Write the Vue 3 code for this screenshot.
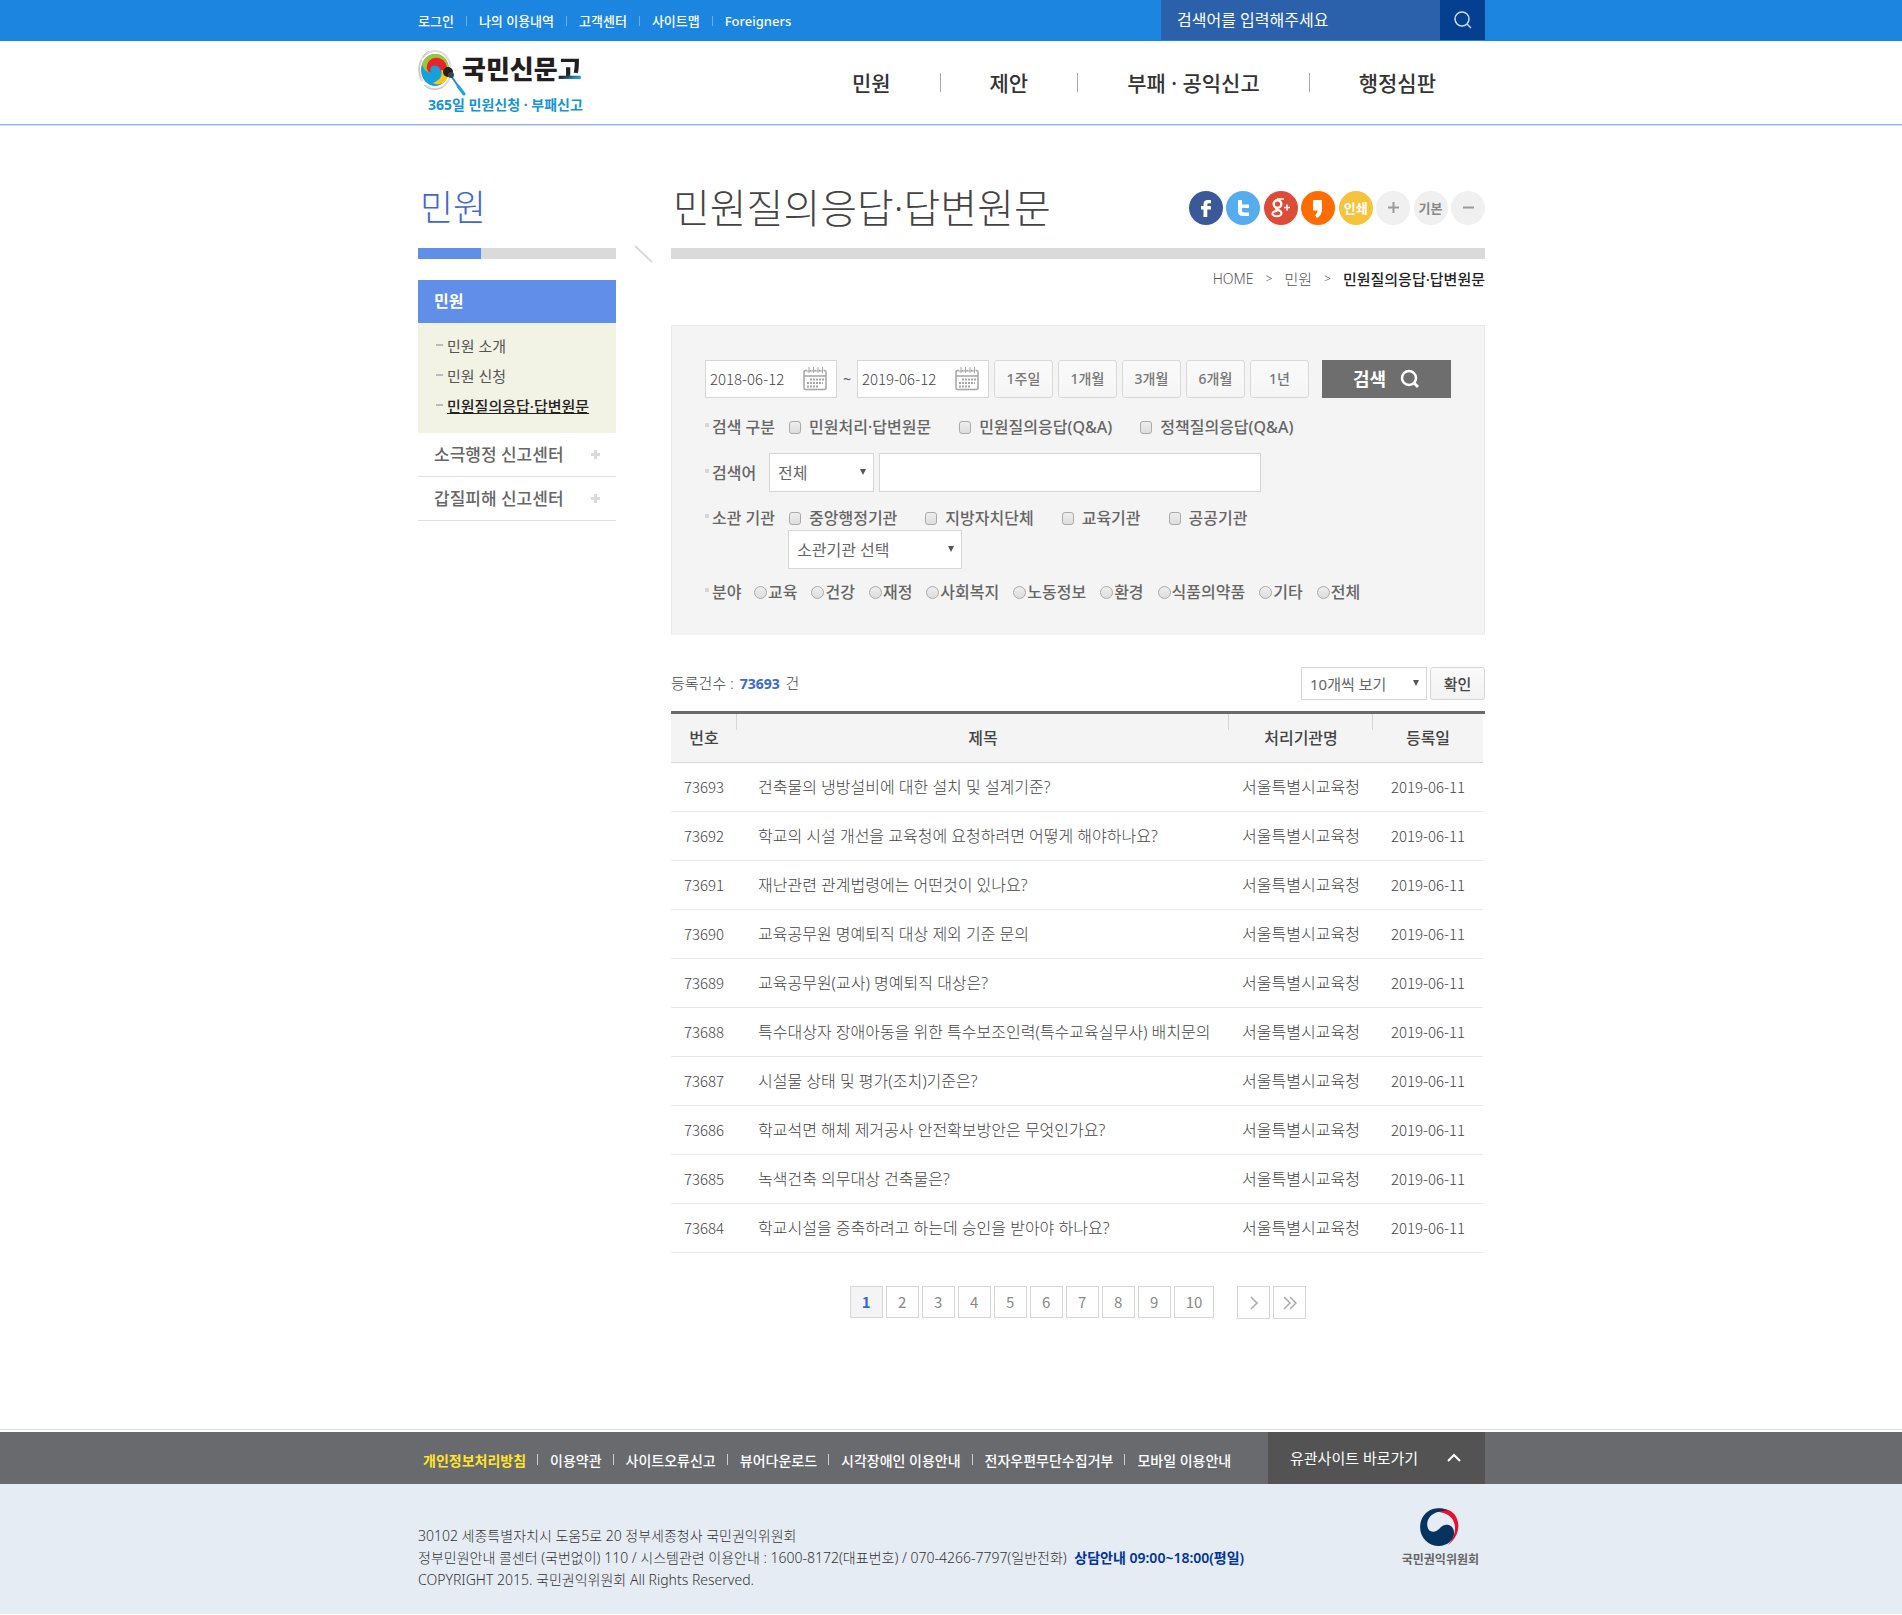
<script setup>
import { ref } from 'vue'

const topLinks = ['로그인', '나의 이용내역', '고객센터', '사이트맵', 'Foreigners']
const mainMenu = ['민원', '제안', '부패 · 공익신고', '행정심판']
const subMenu = ['민원 소개', '민원 신청', '민원질의응답·답변원문']
const otherMenu = ['소극행정 신고센터', '갑질피해 신고센터']

const fromDate = ref('2018-06-12')
const toDate = ref('2019-06-12')
const periods = ['1주일', '1개월', '3개월', '6개월', '1년']
const kinds = ['민원처리·답변원문', '민원질의응답(Q&A)', '정책질의응답(Q&A)']
const orgs = ['중앙행정기관', '지방자치단체', '교육기관', '공공기관']
const fields = ['교육', '건강', '재정', '사회복지', '노동정보', '환경', '식품의약품', '기타', '전체']

const titles = [
  '건축물의 냉방설비에 대한 설치 및 설계기준?',
  '학교의 시설 개선을 교육청에 요청하려면 어떻게 해야하나요?',
  '재난관련 관계법령에는 어떤것이 있나요?',
  '교육공무원 명예퇴직 대상 제외 기준 문의',
  '교육공무원(교사) 명예퇴직 대상은?',
  '특수대상자 장애아동을 위한 특수보조인력(특수교육실무사) 배치문의',
  '시설물 상태 및 평가(조치)기준은?',
  '학교석면 해체 제거공사 안전확보방안은 무엇인가요?',
  '녹색건축 의무대상 건축물은?',
  '학교시설을 증축하려고 하는데 승인을 받아야 하나요?',
]
const rows = titles.map((title, i) => ({
  no: 73693 - i,
  title,
  org: '서울특별시교육청',
  date: '2019-06-11',
}))

const footLinks = ['개인정보처리방침', '이용약관', '사이트오류신고', '뷰어다운로드', '시각장애인 이용안내', '전자우편무단수집거부', '모바일 이용안내']
</script>

<template>
  <div class="page">
    <div class="topbar">
      <div class="wrap topbar-in">
        <ul class="toplinks">
          <li v-for="t in topLinks" :key="t"><a href="#">{{ t }}</a></li>
        </ul>
        <form class="topsearch" @submit.prevent>
          <input type="text" aria-label="통합검색" placeholder="검색어를 입력해주세요" />
          <button type="submit" aria-label="검색">
            <svg width="18" height="18" viewBox="0 0 18 18" fill="none" stroke="#c9dcf3" stroke-width="1.5">
              <circle cx="8" cy="8" r="7" /><path d="M13 13l4 4" />
            </svg>
          </button>
        </form>
      </div>
    </div>

    <header class="header">
      <div class="wrap header-in">
        <a href="#" class="logo">
          <svg class="logo-mark" width="50" height="48" viewBox="0 0 50 48" fill="none">
            <ellipse cx="17" cy="20" rx="16" ry="19" stroke="#dcdcdc" stroke-width="2" stroke-dasharray="38 5 22 3" />
            <path d="M3 28C-1 18 2 6 11 1M6 35c6 6 14 5 19 2" stroke="#c4c4c4" />
            <ellipse cx="17" cy="20" rx="14" ry="16" fill="#18a0dc" />
            <path d="M4 14C7 6 12 4 18 4c8 0 13 7 13 15l-6-5c-4-6-11-5-13 0-2 4-1 7 1 9-6-1-8-5-9-9z" fill="#9bc53b" />
            <path d="M9 16c1-6 6-9 11-8 6 1 9 6 9 11l-6 4c0-6-5-9-8-7-3 1-3 4-2 7-3-1-5-4-4-7z" fill="#e8232a" />
            <path d="M23 20c2 6-1 10-8 13 8 4 15-2 16-11z" fill="#fcc70e" />
            <path d="M31 23L45 43" stroke="#1b8fca" stroke-width="2" />
            <path d="M40 36l6 8" stroke="#1ea3dc" stroke-width="3" stroke-linecap="round" />
            <circle cx="30" cy="22" r="5" fill="#231f20" /><circle cx="33" cy="25" r="3" fill="#3a4350" />
          </svg>
          <span class="logo-name">국민신문<b>고</b></span>
          <span class="logo-sub">365일 민원신청 · 부패신고</span>
        </a>
        <ul class="mainmenu">
          <li v-for="m in mainMenu" :key="m"><a href="#">{{ m }}</a></li>
        </ul>
      </div>
    </header>

    <div class="wrap body">
      <aside class="side">
        <h2>민원</h2>
        <div class="sidebar-line"><i></i></div>
        <a href="#" class="side-head">민원</a>
        <ul class="side-sub">
          <li v-for="(s, i) in subMenu" :key="s" :class="{ on: i === 2 }"><a href="#">{{ s }}</a></li>
        </ul>
        <ul class="side-other">
          <li v-for="s in otherMenu" :key="s">
            <a href="#">{{ s }}
              <svg width="9" height="9" viewBox="0 0 9 9"><path d="M3 0h3v3h3v3H6v3H3V6H0V3h3z" fill="#dadada" /></svg>
            </a>
          </li>
        </ul>
      </aside>

      <svg class="slash" width="19" height="18" viewBox="0 0 19 18"><path d="M1 1l17 16" stroke="#dadada" stroke-width="2" /></svg>

      <main class="main">
        <div class="title-row">
          <h1>민원질의응답·답변원문</h1>
          <div class="share">
            <button type="button" class="fb" aria-label="페이스북">
              <svg width="34" height="34" viewBox="0 0 34 34"><path d="M14.500 26V18.500H12V15h2.500v-1.500c0-3.200 1.600-4.500 4.500-4.500h3v3.300h-2c-1.200 0-1.700.5-1.700 1.500V15H22v3.500h-3.700V26z" fill="#fff" /></svg>
            </button>
            <button type="button" class="tw" aria-label="트위터">
              <svg width="34" height="34" viewBox="0 0 34 34"><path d="M12 9h4v4.500h7V17h-7v2.500c0 1.300.6 2 2 2h5V25h-6c-3.500 0-5-1.700-5-5z" fill="#fff" /></svg>
            </button>
            <button type="button" class="gp" aria-label="구글 플러스">
              <svg width="34" height="34" viewBox="0 0 34 34" fill="none" stroke="#fff">
                <circle cx="13.500" cy="13" r="3.800" stroke-width="2.400" /><path d="M13 8h7" stroke-width="1.500" />
                <path d="M12 16.500c-1.500 1.800 3 2.400 4.500 3.800 2.200 2.200.3 5-3.300 5-3.300 0-5.200-1.300-4.700-3 .5-1.500 2.500-2.300 5-2.200" stroke-width="2" />
                <path d="M20 16.500h6M23 13.500v6" stroke-width="1.600" />
              </svg>
            </button>
            <button type="button" class="ks" aria-label="카카오스토리">
              <svg width="34" height="34" viewBox="0 0 34 34"><path d="M12 9h9v9c0 4.500-1.700 7.500-5 9l-2-3c1.600-1 2.300-2.300 2.500-4.500H12z" fill="#fff" /></svg>
            </button>
            <button type="button" class="pr">인쇄</button>
            <button type="button" class="sz" aria-label="글자 크게">
              <svg width="34" height="34" viewBox="0 0 34 34"><path d="M12 16.500h11M17.500 11v11" stroke="#999" stroke-width="2" /></svg>
            </button>
            <button type="button" class="sz">기본</button>
            <button type="button" class="sz" aria-label="글자 작게">
              <svg width="34" height="34" viewBox="0 0 34 34"><path d="M12 16.500h11" stroke="#999" stroke-width="2" /></svg>
            </button>
          </div>
        </div>
        <div class="main-line"></div>

        <nav class="crumb">
          <a href="#" class="home">HOME</a><span>&gt;</span><a href="#">민원</a><span>&gt;</span><strong>민원질의응답·답변원문</strong>
        </nav>

        <form class="panel" @submit.prevent>
          <div class="row dates">
            <div v-for="k in 2" :key="k" class="date-cell">
              <span v-if="k === 2" class="tilde">~</span>
              <div class="date">
                <input v-if="k === 1" v-model="fromDate" type="text" aria-label="시작일" />
                <input v-else v-model="toDate" type="text" aria-label="종료일" />
                <button type="button" aria-label="달력">
                  <svg width="24" height="24" viewBox="0 0 24 24" fill="none" stroke="#a5a5a5">
                    <rect x="1" y="3.500" width="22" height="19" rx="1.500" stroke-width="1.500" />
                    <path d="M1 9h22" stroke-width="1.500" />
                    <path d="M5.500 1v6M10 1v6M14.500 1v6M19 1v6" stroke="#fff" stroke-width="3" />
                    <path d="M6 0v6M10.500 0v6M15 0v6M19.500 0v6M4 4h16" />
                    <path d="M7 12.500h14M4 16h16M4 19.500h11" stroke-width="2" stroke-dasharray="2 1" />
                  </svg>
                </button>
              </div>
            </div>
            <button v-for="p in periods" :key="p" type="button" class="period">{{ p }}</button>
            <button type="submit" class="go">검색
              <svg width="20" height="20" viewBox="0 0 20 20" fill="none" stroke="#fff">
                <circle cx="9" cy="9" r="7" stroke-width="2.500" /><path d="M14 14l4 4" stroke-width="3" />
              </svg>
            </button>
          </div>

          <div class="row kinds">
            <span class="lab">검색 구분</span>
            <label v-for="k in kinds" :key="k" class="check"><input type="checkbox" />{{ k }}</label>
          </div>

          <div class="row keyword">
            <label class="lab" for="kw">검색어</label>
            <div class="sel sel-a"><select aria-label="검색 범위"><option>전체</option></select></div>
            <input id="kw" type="text" class="kw" />
          </div>

          <div class="row orgs">
            <span class="lab">소관 기관</span>
            <label v-for="o in orgs" :key="o" class="check"><input type="checkbox" />{{ o }}</label>
          </div>
          <div class="sel sel-b"><select aria-label="소관기관"><option>소관기관 선택</option></select></div>

          <div class="row fields">
            <span class="lab">분야</span>
            <label v-for="f in fields" :key="f" class="radio"><input type="radio" name="field" />{{ f }}</label>
          </div>
        </form>

        <div class="list-head">
          <p>등록건수 : <strong>73693</strong> 건</p>
          <div class="list-ctl">
            <div class="sel sel-c"><select aria-label="목록 개수"><option>10개씩 보기</option></select></div>
            <button type="button" class="ok">확인</button>
          </div>
        </div>

        <div class="table-box">
          <table>
            <colgroup><col class="c1" /><col /><col class="c3" /><col class="c4" /></colgroup>
            <thead>
              <tr><th>번호</th><th>제목</th><th>처리기관명</th><th>등록일</th></tr>
            </thead>
            <tbody>
              <tr v-for="r in rows" :key="r.no">
                <td class="num">{{ r.no }}</td>
                <td class="tit"><a href="#">{{ r.title }}</a></td>
                <td>{{ r.org }}</td>
                <td class="num">{{ r.date }}</td>
              </tr>
            </tbody>
          </table>
        </div>

        <nav class="pages">
          <a v-for="n in 10" :key="n" href="#" :class="{ on: n === 1 }">{{ n }}</a>
          <a href="#" class="arrow first" aria-label="다음">
            <svg width="14" height="14" viewBox="0 0 14 14" fill="none" stroke="#aaa" stroke-width="1.500"><path d="M4 1l6 6-6 6" /></svg>
          </a>
          <a href="#" class="arrow" aria-label="마지막">
            <svg width="14" height="14" viewBox="0 0 14 14" fill="none" stroke="#aaa" stroke-width="1.500"><path d="M1 1l6 6-6 6M7 1l6 6-6 6" /></svg>
          </a>
        </nav>
      </main>
    </div>

    <footer>
      <div class="footbar">
        <div class="wrap footbar-in">
          <ul>
            <li v-for="f in footLinks" :key="f"><a href="#">{{ f }}</a></li>
          </ul>
          <button type="button">유관사이트 바로가기
            <svg width="14" height="10" viewBox="0 0 14 10" fill="none" stroke="#fff" stroke-width="2"><path d="M1 8l6-6 6 6" /></svg>
          </button>
        </div>
      </div>
      <div class="footinfo">
        <div class="wrap footinfo-in">
          <address>
            30102 세종특별자치시 도움5로 20 정부세종청사 국민권익위원회<br />
            정부민원안내 콜센터 (국번없이) 110 / 시스템관련 이용안내 : 1600-8172(대표번호) / 070-4266-7797(일반전화) <strong>상담안내 09:00~18:00(평일)</strong><br />
            COPYRIGHT 2015. 국민권익위원회 All Rights Reserved.
          </address>
          <div class="gov">
            <svg width="40" height="38" viewBox="0 0 40 38">
              <path d="M7 6C15-2 29-1 35 7 41 16 39 29 28 37 35 29 37 20 33 12 28 4 16 2 7 6z" fill="#e8102f" />
              <path d="M29 3C18-3 5 1 1 13c-4 14 6 25 18 25 9 0 16-7 15-14 0-6-7-10-13-5-4 5-9 6-12 3C5 16 8 8 15 5c5-2 10-3 14-2z" fill="#06345f" />
            </svg>
            <span>국민권익위원회</span>
          </div>
        </div>
      </div>
    </footer>
  </div>
</template>

<style>
body { margin: 0; background: #fff; }
</style>

<style scoped>
* { box-sizing: border-box; }
.page { font-family: "Noto Sans", "Noto Sans CJK KR", sans-serif; font-size: 16px; line-height: 24px; color: #666; }
ul, h1, h2, p { margin: 0; padding: 0; list-style: none; }
a { color: inherit; text-decoration: none; }
button, input, select { font: inherit; color: inherit; margin: 0; padding: 0; border: 0; border-radius: 0; }
button { cursor: pointer; }
svg { display: block; flex: none; }
.wrap { max-width: 1068px; margin: 0 auto; padding-left: 1px; }

.topbar { background: #1b85df; color: #fff; }
.topbar-in { display: flex; justify-content: space-between; height: 41px; }
.toplinks { display: flex; align-items: center; font-size: 13px; line-height: 20px; font-weight: 500; }
.toplinks li { display: flex; align-items: center; }
.toplinks li + li::before { content: ""; width: 1px; height: 10px; margin: 0 12px; background: #68b1f0; }
.topsearch { display: flex; width: 324px; height: 40px; }
.topsearch input { flex: 1; min-width: 0; padding-left: 16px; background: #2b60ab; color: #fff; outline: 0; }
.topsearch input::placeholder { color: #fff; opacity: 1; }
.topsearch button { display: flex; align-items: center; justify-content: center; width: 45px; background: #043f90; }

.header { border-bottom: 1px solid #d9dcea; }
.header::after { content: ""; display: block; height: 1px; background: #8fb0f0; }
.header-in { display: flex; justify-content: space-between; height: 83px; }
.logo { display: grid; grid-template-columns: 44px auto; grid-template-rows: 42px 26px; align-content: start; padding-top: 9px; }
.logo-mark { grid-row: 1 / 3; grid-column: 1; }
.logo-name { font-size: 26px; line-height: 38px; font-weight: 900; color: #231f20; }
.logo-name b { font-weight: 900; background: linear-gradient(160deg, #231f20 60%, #1b9ad6 75%); -webkit-background-clip: text; background-clip: text; color: transparent; }
.logo-sub { grid-row: 2; grid-column: 1 / 3; padding-left: 10px; font-size: 14px; line-height: 26px; font-weight: 700; color: #1594d2; white-space: nowrap; }
.mainmenu { display: flex; align-items: center; padding-right: 49px; font-size: 21px; line-height: 30px; font-weight: 500; color: #333; }
.mainmenu li { display: flex; align-items: center; }
.mainmenu li + li::before { content: ""; width: 1px; height: 19px; margin: 0 49px; background: #aaa; }

.body { display: grid; grid-template-columns: 198px 55px minmax(0, 1fr); padding-top: 52px; }
.side h2, .title-row { height: 70px; }
.side h2 { padding: 0 2px; font-size: 36px; line-height: 60px; font-weight: 300; color: #3d68cf; }
.sidebar-line { height: 11px; background: #dadada; }
.sidebar-line i { display: block; width: 63px; height: 11px; background: #608ee8; }
.side-head { display: block; margin-top: 21px; padding-left: 16px; font-weight: 700; line-height: 43px; background: #608ee8; color: #fff; }
.side-sub { padding: 8px 0 12px 18px; background: #f2f2e5; font-size: 15px; line-height: 30px; color: #555; }
.side-sub li { display: flex; align-items: center; height: 30px; }
.side-sub li::before { content: ""; width: 7px; height: 2px; margin: 0 4px 2px 0; background: #bbb; }
.side-sub .on { font-weight: 500; color: #222; }
.side-sub .on a { text-decoration: underline; }
.side-other { font-size: 17px; font-weight: 500; }
.side-other a { display: flex; align-items: center; justify-content: space-between; height: 44px; padding: 0 16px; border-bottom: 1px solid #e0e0e0; }
.slash { margin: 67px 0 0 18px; }

.title-row { display: flex; justify-content: space-between; }
h1 { padding-left: 2px; font-size: 40px; line-height: 60px; font-weight: 300; color: #444; }
.share { display: flex; justify-content: space-between; width: 296px; padding-top: 13px; }
.share button { width: 34px; height: 34px; border-radius: 50%; font-size: 13px; line-height: 34px; font-weight: 700; }
.fb { background: #3b5998; }
.tw { background: #55acee; }
.gp { background: #dd4b39; }
.ks { background: #ff6c00; }
.pr { background: #f5c43c; color: #fff; }
.sz { background: #f0f0f0; color: #888; }
.main-line { height: 11px; background: #dadada; }

.crumb { display: flex; justify-content: flex-end; gap: 12px; margin-top: 8px; font-size: 15px; font-weight: 300; color: #555; }
.crumb .home { font-size: 14px; }
.crumb span { font-size: 12px; }
.crumb strong { font-weight: 500; color: #222; }

.panel { margin-top: 34px; padding: 34px 33px 0; height: 310px; border: 1px solid #e9e9e9; border-bottom: 0; background: #f4f4f4; font-weight: 500; }
.row { display: flex; align-items: center; }
.date-cell { display: flex; align-items: center; }
.tilde { width: 20px; text-align: center; font-size: 14px; }
.date { display: flex; align-items: center; width: 132px; height: 38px; padding: 0 9px 0 4px; border: 1px solid #d6d6d6; background: #fff; }
.date input { flex: 1; min-width: 0; font-family: "Noto Sans CJK KR", sans-serif; font-size: 15px; font-weight: 300; color: #444; background: none; }
.date button { background: none; }
.period { width: 59px; height: 38px; margin-left: 5px; border: 1px solid #d9d9d9; border-radius: 3px; background: linear-gradient(#fafafa, #f5f5f5); font-size: 14px; color: #777; }
.go { display: flex; align-items: center; justify-content: center; gap: 14px; width: 129px; height: 38px; margin-left: 13px; background: #6e6e6e; color: #fff; font-size: 18px; font-weight: 700; }
.lab { display: flex; align-items: center; }
.lab::before { content: ""; width: 4px; height: 4px; margin: 0 3px 4px 0; background: #d6d6d6; }
.kinds { margin-top: 17px; }
.kinds .lab, .orgs .lab { width: 84px; }
.check { display: flex; align-items: center; margin-right: 28px; }
.check input { appearance: none; width: 12px; height: 13px; margin-right: 8px; border: 1px solid #aaa; border-radius: 3px; background: linear-gradient(#eee, #ddd); }
.keyword { margin-top: 14px; gap: 5px; }
.keyword .lab { width: 59px; }
.sel { position: relative; }
.sel::after { content: ""; position: absolute; right: 8px; top: 16px; border: solid transparent; border-width: 6px 3px 0; border-top-color: #555; pointer-events: none; }
.sel select { appearance: none; display: block; width: 100%; height: 39px; padding-left: 8px; border: 1px solid #d6d6d6; background: #fff; font-weight: 400; }
.sel-a { width: 105px; }
.kw { width: 382px; height: 39px; padding: 0 8px; border: 1px solid #d6d6d6; background: #fff; font-weight: 400; }
.orgs { margin-top: 14px; }
.sel-b { width: 174px; margin-left: 83px; }
.fields { margin-top: 11px; }
.fields .lab { width: 49px; }
.radio { display: flex; align-items: center; margin-right: 14px; }
.radio input { appearance: none; width: 13px; height: 13px; margin-right: 1px; border: 1px solid #aaa; border-radius: 50%; background: linear-gradient(#eee, #ddd); }

.list-head { display: flex; justify-content: space-between; margin-top: 32px; font-size: 15px; }
.list-head p { line-height: 32px; font-weight: 300; color: #444; }
.list-head strong { margin: 0 2px; font-size: 14px; font-weight: 700; color: #3d68cf; }
.list-ctl { display: flex; gap: 3px; }
.sel-c { width: 126px; }
.sel-c select { height: 33px; }
.sel-c::after { top: 13px; }
.ok { width: 55px; height: 33px; border: 1px solid #d6d6d6; border-radius: 3px; background: linear-gradient(#fafafa, #f3f3f3); font-weight: 500; color: #444; }

.table-box { margin-top: 11px; padding-right: 2px; border-top: 3px solid #696b6a; }
table { width: 100%; table-layout: fixed; border-collapse: separate; border-spacing: 0; }
.c1 { width: 66px; }
.c3 { width: 144px; }
.c4 { width: 110px; }
th, td { height: 49px; padding: 0; text-align: center; border-bottom: 1px solid #e8e8e8; white-space: nowrap; font-weight: 300; color: #444; }
th { font-weight: 500; border-bottom-color: #d6d6d6; background: linear-gradient(#d6d6d6, #d6d6d6) right top / 1px 16px no-repeat #f4f4f4; }
th:last-child { background: #f4f4f4; }
.num { font-family: "Noto Sans CJK KR", sans-serif; font-size: 15px; }
.tit { padding-left: 21px; text-align: left; }

.pages { display: flex; justify-content: center; gap: 3px; margin-top: 33px; font: 15px/30px "Noto Sans CJK KR", sans-serif; color: #888; }
.pages a { min-width: 33px; height: 32px; padding: 0 11px; border: 1px solid #d6d6d6; text-align: center; }
.pages a.on { padding: 0; background: #f4f4f4; font-weight: 700; color: #3d68cf; }
.pages a.arrow { display: flex; align-items: center; justify-content: center; height: 33px; padding: 0; }
.pages a.first { margin-left: 20px; }

footer { margin-top: 110px; border-top: 1px solid #ddd; padding-top: 2px; }
.footbar { background: #696a6e; color: #fff; }
.footbar-in { display: flex; justify-content: space-between; }
.footbar ul { display: flex; align-items: center; padding: 6px 0 0 5px; font-size: 14px; line-height: 20px; font-weight: 500; }
.footbar li { display: flex; align-items: center; }
.footbar li:first-child { font-weight: 700; color: #ffe52b; }
.footbar li + li::before { content: ""; width: 1px; height: 11px; margin: 0 12px 4px 11px; background: #ccc; }
.footbar button { display: flex; align-items: center; justify-content: space-between; width: 217px; height: 52px; padding: 0 24px 0 22px; background: #535353; color: #fff; font-size: 15px; }
.footinfo { background: #e5ecf4; height: 130px; }
.footinfo-in { display: flex; justify-content: space-between; padding-right: 6px; }
address { padding-top: 41px; font-style: normal; font-size: 14px; line-height: 22px; font-weight: 300; color: #333; }
address strong { margin-left: 4px; font-weight: 600; color: #039; }
.gov { display: flex; flex-direction: column; align-items: center; padding-top: 24px; font-size: 12px; line-height: 18px; font-weight: 700; }
.gov span { margin-top: 5px; }
</style>
